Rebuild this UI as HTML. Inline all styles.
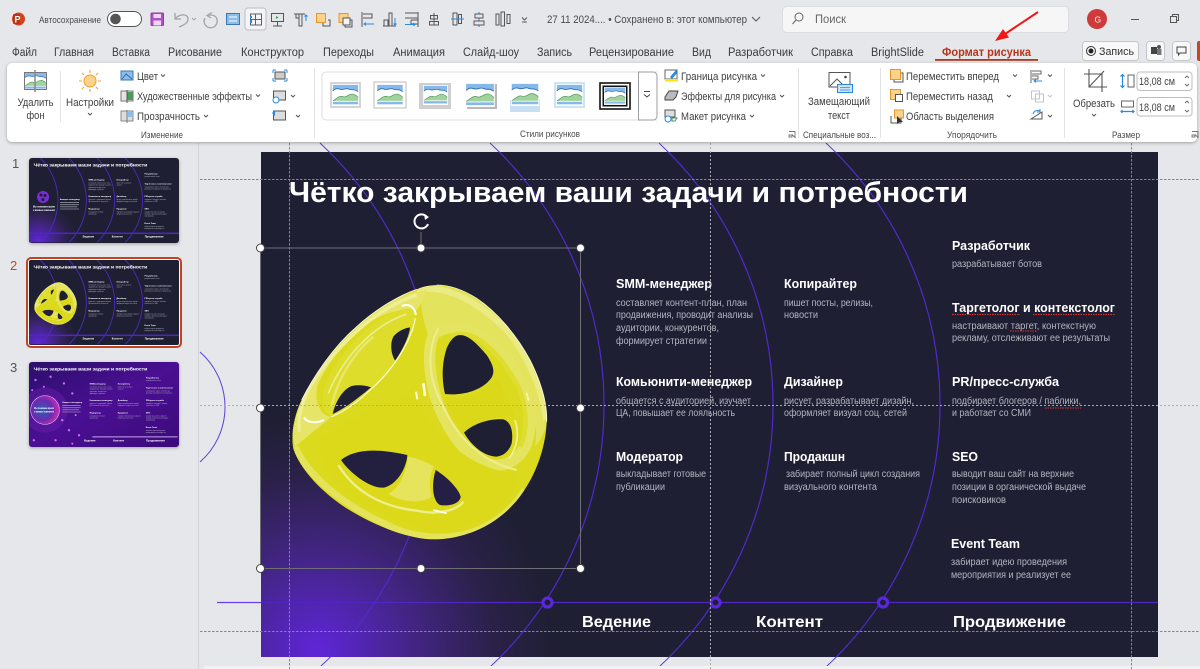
<!DOCTYPE html>
<html><head><meta charset="utf-8"><style>
html,body{margin:0;padding:0;background:#e6e7ea;width:1200px;height:669px;overflow:hidden}
svg{display:block;overflow:hidden;font-family:"Liberation Sans","Noto Sans CJK JP",sans-serif}
.r{font-size:11px;fill:#404040}
.s{font-size:9.5px;fill:#4a4a4a}
.tb{font-size:11.5px;fill:#3a3a3a}
.h{font-size:13px;font-weight:bold;fill:#fff}
.d{font-size:10px;fill:#b4b5c0}
.b{font-size:16px;font-weight:bold;fill:#fff}
.ch{fill:none;stroke:#555;stroke-width:1}
</style></head><body>
<svg width="1200" height="669" viewBox="0 0 1200 669" xmlns="http://www.w3.org/2000/svg">
<defs>
<radialGradient id="glow" gradientUnits="userSpaceOnUse" cx="318" cy="650" r="235">
<stop offset="0" stop-color="#5f25d9"/><stop offset=".4" stop-color="#432585"/><stop offset=".75" stop-color="#2a2148"/><stop offset="1" stop-color="#1e1f33"/>
</radialGradient>
<linearGradient id="purp" x1="0" y1="0" x2="1" y2="1"><stop offset="0" stop-color="#2b0f6b"/><stop offset=".5" stop-color="#4a0f92"/><stop offset="1" stop-color="#3b0a7a"/></linearGradient>
<radialGradient id="orb" cx=".4" cy=".5" r=".6"><stop offset="0" stop-color="#2a5fb0"/><stop offset=".6" stop-color="#6a2bb0"/><stop offset="1" stop-color="#d12fb0"/></radialGradient>
<clipPath id="slideClip"><rect x="261" y="152" width="897" height="505"/></clipPath>
<filter id="sh" x="-2%" y="-10%" width="104%" height="125%" color-interpolation-filters="sRGB"><feDropShadow dx="0" dy="1" stdDeviation="1.5" flood-color="#000" flood-opacity=".3"/></filter>
<clipPath id="yc"><path d="M530,135 C570,135 610,150 650,175 C710,215 770,285 810,360 C845,430 862,490 860,545 C858,610 835,690 790,755 C750,815 690,860 620,882 C580,895 540,900 500,897 C430,890 340,855 260,805 C190,760 120,690 100,625 C92,590 100,530 125,480 C160,410 220,320 290,260 C350,205 420,165 470,148 C490,140 510,135 530,135Z"/></clipPath>
<symbol id="pic" viewBox="0 0 32 26" overflow="visible">
<rect x="0" y="0" width="32" height="26" fill="#fff"/>
<path d="M1,1H31V9C26,5 24,8 20,6 C16,4 13,8 9,6 C6,5 3,6 1,8Z" fill="#86b9ea"/>
<path d="M1,8C3,6 6,5 9,6C13,8 16,4 20,6C24,8 26,5 31,9" fill="none" stroke="#2b6cb8" stroke-width="1"/>
<path d="M1,20C6,17 9,13 13,15C17,17 20,11 25,12C28,13 30,14 31,16V20Z" fill="#a3d39c"/>
<path d="M1,20C6,17 9,13 13,15C17,17 20,11 25,12C28,13 30,14 31,16" fill="none" stroke="#4d9a5a" stroke-width=".8"/>
<rect x="1" y="21" width="30" height="3" fill="#86b9ea"/>
</symbol>
<g id="arcs" fill="none">
<path d="M320,143A358,358 0 0 1 320,667"/>
<path d="M490,143A358,358 0 0 1 490,667"/>
<path d="M659,143A358,358 0 0 1 659,667"/>
<path d="M826,143A358,358 0 0 1 826,667"/>
</g>
<g id="yellow">
<g transform="translate(260 240) scale(.33333)">
<g clip-path="url(#yc)">
<rect x="80" y="120" width="800" height="800" fill="#dcda1e"/>
<!-- broad lighter top -->
<path d="M480,140 C480,190 490,250 510,300 C600,230 720,300 790,430 C820,500 835,560 825,620 C860,580 880,500 860,440 C810,300 650,110 480,140Z" fill="#e4e35e"/>
<path d="M470,150 C560,130 660,190 740,270 C800,340 850,450 858,540" fill="none" stroke="#ebeb86" stroke-width="18"/>
<!-- left rim -->
<path d="M500,150 C490,180 480,200 465,215 C360,190 240,300 175,430 C160,470 175,530 215,530 C180,560 140,590 105,620 C85,560 120,470 180,385 C260,270 380,160 500,150Z" fill="#e6e568"/>
<path d="M470,165 C360,200 240,300 150,440 C125,490 112,530 118,575" fill="none" stroke="#eeee96" stroke-width="10"/>
<!-- bottom rim -->
<path d="M105,620 C150,720 270,810 420,872 C480,892 540,896 600,886 C680,870 750,820 795,750" fill="none" stroke="#e4e35a" stroke-width="20"/>
<!-- rings around right holes -->
<path d="M525,280 C590,235 680,280 750,370 C800,440 825,530 800,610 C770,680 700,695 640,650 C580,600 530,510 515,420 C505,360 505,310 525,280Z" fill="none" stroke="#e5e460" stroke-width="34"/>
<path d="M535,265 C505,320 500,400 540,480 C575,560 640,660 770,690" fill="none" stroke="#eeee90" stroke-width="6"/>
<path d="M570,290 C640,255 720,340 775,440 C800,500 805,570 780,620" fill="none" stroke="#dedd30" stroke-width="14"/>
<!-- spokes -->
<path d="M552,472 C620,480 680,455 712,410 L765,530 C700,525 650,545 608,580 C585,540 565,510 552,472Z" fill="#dad818"/>
<!-- center body stays darker -->
<path d="M180,590 C300,530 420,450 470,480 C520,560 600,680 760,700 C790,720 760,770 700,820 C640,860 560,880 500,870 C420,850 300,800 220,720 C190,680 170,630 180,590Z" fill="#dbd91a"/>
<!-- pale spoke at bottom -->
<path d="M445,650 C435,710 415,745 385,762 C430,790 490,790 515,770 C505,730 510,700 522,680 C500,665 470,655 445,650Z" fill="#e5e45c"/>
<!-- hole lip bottom -->
<path d="M235,675 C280,750 360,800 470,812 C530,826 590,812 610,785" fill="none" stroke="#eeee90" stroke-width="7"/>
<!-- inner left face -->
<path d="M452,205 C380,205 260,300 200,420 C180,470 185,520 215,530 C300,490 400,410 452,292 C470,245 470,210 452,205Z" fill="#dedd2c"/>
<path d="M205,460 C250,350 340,255 440,222" fill="none" stroke="#ecec90" stroke-width="5"/>
<path d="M215,500 C230,420 280,340 340,290" fill="none" stroke="#e8e770" stroke-width="7"/>
</g>
<!-- holes -->
<path fill="#1e1f33" d="M600,285 C625,285 650,310 680,345 C700,375 705,395 695,412 C670,450 610,468 555,462 C545,420 545,370 560,325 C570,300 585,285 600,285Z"/>
<path fill="#1e1f33" d="M612,578 C640,550 690,535 730,538 C755,545 760,580 755,610 C745,640 720,655 695,648 C660,640 630,610 612,578Z"/>
<path fill="#231f3e" d="M243,660 C280,630 340,622 442,645 C440,680 415,730 375,742 C335,750 270,700 243,660Z"/>
<path fill="#251f46" d="M527,690 C560,710 595,745 602,770 C600,790 570,800 540,795 C520,785 512,740 527,690Z"/>
<path fill="#1e1f33" d="M450,262 C448,290 425,335 405,362 C392,340 390,310 400,290 C412,275 430,265 450,262Z"/>
<path fill="#1f2035" d="M333,442 C300,470 255,505 218,522 C225,490 245,450 275,438 C295,434 315,436 333,442Z"/>
<!-- specular -->
<path d="M466,235 C455,300 400,390 330,450 C290,490 250,515 215,530" fill="none" stroke="#fbfbe0" stroke-width="3.5"/>
<path d="M425,198 C445,190 462,197 468,225" fill="none" stroke="#fff" stroke-width="6"/>
<path d="M132,532 C142,550 170,550 192,540" fill="none" stroke="#fff" stroke-width="6"/>
<path d="M490,430 L495,468" fill="none" stroke="#fbfbd8" stroke-width="8"/>
<path d="M468,455 L472,478" fill="none" stroke="#fbfbd8" stroke-width="6"/>
<path d="M800,458 L806,482" fill="none" stroke="#f6f6b0" stroke-width="5"/>
<path d="M765,540 C778,580 772,620 748,655" fill="none" stroke="#f1f19a" stroke-width="5"/>
<path d="M520,810 L560,820" fill="none" stroke="#fff" stroke-width="5"/>
<path d="M530,135 C570,135 610,150 650,175 C710,215 770,285 810,360 C845,430 862,490 860,545 M125,480 C160,410 220,320 290,260 C350,205 420,165 470,148" fill="none" stroke="#f9f9d8" stroke-width="2.5"/>
</g>
</g>
<g id="stext">
<text class="h" x="616" y="288" textLength="96" lengthAdjust="spacingAndGlyphs">SMM-менеджер</text>
<text class="d" x="616" y="306" textLength="131" lengthAdjust="spacingAndGlyphs">составляет контент-план, план</text>
<text class="d" x="616" y="318" textLength="137" lengthAdjust="spacingAndGlyphs">продвижения, проводит анализы</text>
<text class="d" x="616" y="331" textLength="103" lengthAdjust="spacingAndGlyphs">аудитории, конкурентов,</text>
<text class="d" x="616" y="344" textLength="91" lengthAdjust="spacingAndGlyphs">формирует стратегии</text>
<text class="h" x="784" y="288" textLength="73" lengthAdjust="spacingAndGlyphs">Копирайтер</text>
<text class="d" x="784" y="306" textLength="89" lengthAdjust="spacingAndGlyphs">пишет посты, релизы,</text>
<text class="d" x="784" y="318" textLength="34" lengthAdjust="spacingAndGlyphs">новости</text>
<text class="h" x="952" y="250" textLength="78" lengthAdjust="spacingAndGlyphs">Разработчик</text>
<text class="d" x="952" y="267" textLength="90" lengthAdjust="spacingAndGlyphs">разрабатывает ботов</text>
<text class="h" x="952" y="312" textLength="163" lengthAdjust="spacingAndGlyphs">Таргетолог и контекстолог</text>
<text class="d" x="952" y="329" textLength="144" lengthAdjust="spacingAndGlyphs">настраивают таргет, контекстную</text>
<text class="d" x="952" y="341" textLength="158" lengthAdjust="spacingAndGlyphs">рекламу, отслеживают ее результаты</text>
<text class="h" x="616" y="386" textLength="136" lengthAdjust="spacingAndGlyphs">Комьюнити-менеджер</text>
<text class="d" x="616" y="404" textLength="135" lengthAdjust="spacingAndGlyphs">общается с аудиторией, изучает</text>
<text class="d" x="616" y="416" textLength="119" lengthAdjust="spacingAndGlyphs">ЦА, повышает ее лояльность</text>
<text class="h" x="784" y="386" textLength="59" lengthAdjust="spacingAndGlyphs">Дизайнер</text>
<text class="d" x="784" y="404" textLength="130" lengthAdjust="spacingAndGlyphs">рисует, разрабатывает дизайн,</text>
<text class="d" x="784" y="416" textLength="123" lengthAdjust="spacingAndGlyphs">оформляет визуал соц. сетей</text>
<text class="h" x="952" y="386" textLength="107" lengthAdjust="spacingAndGlyphs">PR/пресс-служба</text>
<text class="d" x="952" y="404" textLength="129" lengthAdjust="spacingAndGlyphs">подбирает блогеров / паблики,</text>
<text class="d" x="952" y="416" textLength="79" lengthAdjust="spacingAndGlyphs">и работает со СМИ</text>
<text class="h" x="616" y="461" textLength="67" lengthAdjust="spacingAndGlyphs">Модератор</text>
<text class="d" x="616" y="477" textLength="90" lengthAdjust="spacingAndGlyphs">выкладывает готовые</text>
<text class="d" x="616" y="490" textLength="49" lengthAdjust="spacingAndGlyphs">публикации</text>
<text class="h" x="784" y="461" textLength="61" lengthAdjust="spacingAndGlyphs">Продакшн</text>
<text class="d" x="786" y="477" textLength="134" lengthAdjust="spacingAndGlyphs">забирает полный цикл создания</text>
<text class="d" x="784" y="490" textLength="93" lengthAdjust="spacingAndGlyphs">визуального контента</text>
<text class="h" x="952" y="461" textLength="26" lengthAdjust="spacingAndGlyphs">SEO</text>
<text class="d" x="952" y="477" textLength="122" lengthAdjust="spacingAndGlyphs">выводит ваш сайт на верхние</text>
<text class="d" x="952" y="490" textLength="134" lengthAdjust="spacingAndGlyphs">позиции в органической выдаче</text>
<text class="d" x="952" y="503" textLength="54" lengthAdjust="spacingAndGlyphs">поисковиков</text>
<text class="h" x="951" y="548" textLength="69" lengthAdjust="spacingAndGlyphs">Event Team</text>
<text class="d" x="951" y="565" textLength="116" lengthAdjust="spacingAndGlyphs">забирает идею проведения</text>
<text class="d" x="951" y="578" textLength="120" lengthAdjust="spacingAndGlyphs">мероприятия и реализует ее</text>
<text class="b" x="582" y="627" textLength="69" lengthAdjust="spacingAndGlyphs">Ведение</text>
<text class="b" x="756" y="627" textLength="67" lengthAdjust="spacingAndGlyphs">Контент</text>
<text class="b" x="953" y="627" textLength="113" lengthAdjust="spacingAndGlyphs">Продвижение</text>
</g>
<text id="stitle" x="289" y="202" font-size="29" font-weight="bold" fill="#fff" textLength="679" lengthAdjust="spacingAndGlyphs">Чётко закрываем ваши задачи и потребности</text>
</defs>

<rect width="1200" height="669" fill="#e6e7ea"/>

<!-- off-slide arcs -->
<use href="#arcs" stroke="#5c3fd6" stroke-width="1"/>
<path d="M200,352A73,73 0 0 1 200,462" fill="none" stroke="#5c3fd6" stroke-width="1"/>
<line x1="217" y1="602.5" x2="261" y2="602.5" stroke="#6a3de8" stroke-width="1.2"/>
<line x1="198.5" y1="143" x2="198.5" y2="669" stroke="#d3d4d8"/>
<rect x="204" y="666" width="996" height="3" fill="#f2f2f3"/>

<!-- slide -->
<rect x="261" y="152" width="897" height="505" fill="#1e1f33"/>
<g clip-path="url(#slideClip)">
<rect x="261" y="400" width="400" height="257" fill="url(#glow)"/>
<use href="#arcs" stroke="#4f2bc9" stroke-width="1.2"/>
<line x1="261" y1="602.5" x2="1158" y2="602.5" stroke="#4f25c4" stroke-width="1.3"/>
</g>
<g fill="#1e1f33" stroke="#5a26e0" stroke-width="3.2">
<circle cx="547.5" cy="602.5" r="4.5"/><circle cx="715.5" cy="602.5" r="4.5"/><circle cx="883" cy="602.5" r="4.5"/>
</g>
<use href="#stext"/>
<use href="#stitle"/>
<!-- spell squiggles -->
<g fill="none" stroke="#d33" stroke-width=".9" stroke-dasharray="1.5 1">
<path d="M952,314.5H1020M1033,314.5H1115M1010,331H1037M1045,408H1081"/>
</g>

<!-- guides -->
<g fill="none" stroke-width="1" stroke-dasharray="2.5 1.5">
<path d="M200,179.5H1200M200,631.5H1200M289.5,143V669M1131.5,143V669" stroke="#e8623c"/>
</g>
<path d="M200,405.5H1200M710.5,143V669" fill="none" stroke="#a9aab2" stroke-dasharray="2 2"/>

<use href="#yellow"/>
<!-- guide stays over picture -->
<path d="M292,405.5H547" fill="none" stroke="#a9aab2" stroke-dasharray="2 2"/>

<!-- selection -->
<rect x="260.5" y="248" width="320" height="320.5" fill="none" stroke="#6e6e76" stroke-width="1"/>
<line x1="421" y1="232" x2="421" y2="248" stroke="#6e6e76"/>
<g fill="#fff" stroke="#444" stroke-width="1">
<circle cx="260.5" cy="248" r="4"/><circle cx="421" cy="248" r="4"/><circle cx="580.5" cy="248" r="4"/>
<circle cx="260.5" cy="408" r="4"/><circle cx="580.5" cy="408" r="4"/>
<circle cx="260.5" cy="568.5" r="4"/><circle cx="421" cy="568.5" r="4"/><circle cx="580.5" cy="568.5" r="4"/>
</g>
<g fill="none" stroke="#fff" stroke-width="2"><path d="M426.5,216.5A7,7 0 1 0 428,224"/></g>
<path d="M424,214L429,217L425,220Z" fill="#fff"/>

<!-- thumbnails -->
<text x="12" y="168" font-size="13" fill="#555">1</text>
<text x="10" y="270" font-size="13" fill="#c8452a">2</text>
<text x="10" y="372" font-size="13" fill="#555">3</text>

<rect x="27" y="258" width="154" height="89" rx="4" fill="#fff" stroke="#c2431f" stroke-width="2"/>
<g filter="url(#sh)"><rect x="29" y="158" width="150" height="85" rx="3" fill="#1e1f33"/></g>
<rect x="29" y="260" width="150" height="85" rx="2" fill="#1e1f33"/>
<g filter="url(#sh)"><rect x="29" y="362" width="150" height="85" rx="3" fill="url(#purp)"/></g>

<g transform="translate(29 158) scale(.1672) translate(-261 -152)">
<g clip-path="url(#slideClip)"><rect x="261" y="400" width="400" height="257" fill="url(#glow)"/><use href="#arcs" stroke="#4f2bc9" stroke-width="5"/><rect x="261" y="598" width="897" height="9" fill="#4f25c4"/></g>
<use href="#stext"/><use href="#stitle"/>
<text x="285" y="448" font-size="17" font-weight="bold" fill="#fff" textLength="131" lengthAdjust="spacingAndGlyphs">Мы понимаем время</text>
<text x="285" y="470" font-size="17" font-weight="bold" fill="#fff" textLength="131" lengthAdjust="spacingAndGlyphs">и важные изменения</text>
<text x="446" y="403" class="h" textLength="119" lengthAdjust="spacingAndGlyphs">Аккаунт-менеджер</text>
<path d="M446,418H560M446,431H560M446,444H550M446,457H560" stroke="#8f90a0" stroke-width="5"/>
<g transform="translate(345 385) scale(.3) translate(-421 -408)"><circle cx="421" cy="408" r="120" fill="#7a2bd8"/><circle cx="380" cy="370" r="30" fill="#1e1f33"/><circle cx="460" cy="380" r="30" fill="#1e1f33"/><circle cx="420" cy="460" r="30" fill="#1e1f33"/></g>
</g>
<g transform="translate(29 260) scale(.1672) translate(-261 -152)">
<g clip-path="url(#slideClip)"><rect x="261" y="400" width="400" height="257" fill="url(#glow)"/><use href="#arcs" stroke="#4f2bc9" stroke-width="5"/><rect x="261" y="598" width="897" height="9" fill="#4f25c4"/></g>
<use href="#stext"/><use href="#stitle"/>
<use href="#yellow"/>
</g>
<g transform="translate(29 362) scale(.1672) translate(-261 -152)">
<g clip-path="url(#slideClip)">
<circle cx="357" cy="439" r="135" fill="#6a1fb0" opacity=".45"/>
<circle cx="357" cy="439" r="86" fill="url(#orb)" stroke="#e9c7ff" stroke-width="3"/>
<g fill="#d46bff"><circle cx="300" cy="260" r="7"/><circle cx="390" cy="240" r="7"/><circle cx="470" cy="280" r="7"/><circle cx="520" cy="340" r="7"/><circle cx="500" cy="560" r="7"/><circle cx="560" cy="590" r="7"/><circle cx="290" cy="620" r="7"/><circle cx="420" cy="620" r="7"/><circle cx="460" cy="500" r="7"/><circle cx="540" cy="470" r="6"/><circle cx="350" cy="300" r="6"/><circle cx="280" cy="320" r="6"/><circle cx="520" cy="640" r="6"/></g>
</g>
<use href="#stext" transform="translate(8 0)"/><use href="#stitle"/>
<text x="292" y="432" font-size="14" font-weight="bold" fill="#fff" textLength="118" lengthAdjust="spacingAndGlyphs">Мы понимаем время</text>
<text x="292" y="454" font-size="14" font-weight="bold" fill="#fff" textLength="118" lengthAdjust="spacingAndGlyphs">и важные изменения</text>
<text x="460" y="397" class="h" textLength="119" lengthAdjust="spacingAndGlyphs">Аккаунт-менеджер</text>
<path d="M460,412H570M460,425H570M460,438H560M460,451H570" stroke="#9a7fc0" stroke-width="5"/>
<path d="M640,600H1150" stroke="#c9a3f2" stroke-width="6"/>
</g>

<!-- title bar -->
<circle cx="18.5" cy="19" r="6.5" fill="#d2431f"/>
<rect x="13" y="14" width="7" height="10" rx="1" fill="#b7361a"/>
<text x="14.5" y="22.5" font-size="9" font-weight="bold" fill="#fff">P</text>
<text class="s" x="39" y="23" textLength="62" lengthAdjust="spacingAndGlyphs">Автосохранение</text>
<rect x="107.5" y="11.5" width="34" height="15" rx="7.5" fill="#fff" stroke="#555"/>
<circle cx="115.5" cy="19" r="5.3" fill="#555"/>
<rect x="151" y="13" width="12.5" height="12.5" rx="1" fill="#b052c8" stroke="#93389f"/><rect x="153.5" y="14" width="7.5" height="4" fill="#f0d6f4"/><rect x="153.5" y="20.5" width="7.5" height="5" fill="#f0d6f4"/>
<g fill="none" stroke="#a2a3a8" stroke-width="1.3">
<path d="M175,13V19H181M175,19C180,13 188,14 188,19 C188,23 184,25 179,27"/>
<path d="M192,18l2,2l2-2" stroke-width=".9"/>
<path d="M212,12.5L207,15.5L211,18M207,15.5C212,14 217,16 217,20A6.5,6.5 0 1 1 205,18"/>
</g>
<!-- qat -->
<rect x="226.5" y="13.5" width="13" height="11" fill="#8dbce6" stroke="#3b78b5"/><path d="M229,17H237M229,21H237" stroke="#fff"/>
<rect x="245" y="8" width="21" height="22" rx="3" fill="#f4f4f6" stroke="#bdbdc2"/>
<g fill="none" stroke="#5f6066"><path d="M250.5,14H261.5V25H250.5ZM250.5,19.5H261.5M255.5,14V25"/></g><path d="M251,16V18M251,20V23" stroke="#2a8adf" stroke-width="2"/>
<g fill="none" stroke="#55565c">
<path d="M271.5,13.5H283.5V21.5H271.5ZM277.5,21.5V26M273,26H282"/><path d="M276,16v3l2.5-1.5z" fill="#2fa14a" stroke="none"/>
<path d="M294,14H305M296,14V18H299V14M299,14V26H302V14"/><path d="M306,21V15M304.5,16.5L306,15L307.5,16.5" stroke="#2a8adf"/>
<path d="M323,20V26H330V20H328" />
<path d="M345,23V27H352V20H348V23Z"/>
<path d="M362,12V27"/><path d="M363,14H372V18H363"/><path d="M374,24H364M366,22.5L364,24L366,25.5" stroke="#2a8adf"/>
<path d="M384,26V20H388V26M389,26V13H392V26M383,26H396"/><path d="M395,18V25M393.5,23.5L395,25L396.5,23.5" stroke="#2a8adf"/>
<path d="M405,13H418M405,18H418M418,12V27M411,20H418M411,24H418M411,20V24"/><path d="M405,24.5H415M413.5,23L415,24.5L413.5,26" stroke="#2a8adf"/>
<path d="M434,13V25"/><rect x="430.5" y="15.5" width="7" height="3.5"/><rect x="429.5" y="21.5" width="9" height="3.5"/>
<rect x="453" y="13" width="4" height="12"/><rect x="458.5" y="14.5" width="3" height="9"/><path d="M451,19H464" stroke="#2a8adf"/>
<path d="M479,12V27" stroke="#2a8adf"/><rect x="475" y="14" width="8" height="4" fill="#e6e7ea"/><rect x="474" y="21" width="10" height="4" fill="#e6e7ea"/>
<rect x="496" y="14" width="3" height="11"/><rect x="501" y="12" width="3.5" height="14"/><rect x="507" y="14.5" width="3" height="9"/>
<path d="M522,17.5l2.5,2.5l2.5-2.5M522,22H527"/>
</g>
<rect x="316.5" y="13.5" width="9" height="9" fill="#fbd28a" stroke="#e8972c"/>
<rect x="339" y="13.5" width="9" height="9" fill="#fbd28a" stroke="#e8972c"/><rect x="343" y="18" width="7" height="7" fill="#f4f4f6" stroke="#55565c"/>
<text x="547" y="23" style="font-size:11px;fill:#4a4a4a" textLength="200" lengthAdjust="spacingAndGlyphs">27 11 2024.... • Сохранено в: этот компьютер</text>
<path d="M752,17l4,4l4-4" class="ch"/>
<rect x="782.5" y="6.5" width="286" height="26" rx="4" fill="#f6f6f7" stroke="#dcdde0"/>
<circle cx="799" cy="17" r="4" fill="none" stroke="#666"/><path d="M796,20l-3.5,4" stroke="#666"/>
<text x="815" y="23" font-size="11.5" fill="#666" textLength="31" lengthAdjust="spacingAndGlyphs">Поиск</text>
<circle cx="1097" cy="19" r="10" fill="#cf3a3a"/>
<text x="1094.5" y="22.5" font-size="8.5" fill="#fff">G</text>
<line x1="1131" y1="19.5" x2="1139" y2="19.5" stroke="#555"/>
<path d="M1170.5,16.5H1176.5V22.5H1170.5ZM1172.5,16V14.5H1178.5V20.5H1177" fill="none" stroke="#555"/>

<!-- tabs -->
<g>
<text class="tb" x="12" y="56" textLength="25" lengthAdjust="spacingAndGlyphs">Файл</text>
<text class="tb" x="54" y="56" textLength="40" lengthAdjust="spacingAndGlyphs">Главная</text>
<text class="tb" x="112" y="56" textLength="38" lengthAdjust="spacingAndGlyphs">Вставка</text>
<text class="tb" x="168" y="56" textLength="54" lengthAdjust="spacingAndGlyphs">Рисование</text>
<text class="tb" x="241" y="56" textLength="63" lengthAdjust="spacingAndGlyphs">Конструктор</text>
<text class="tb" x="323" y="56" textLength="51" lengthAdjust="spacingAndGlyphs">Переходы</text>
<text class="tb" x="393" y="56" textLength="52" lengthAdjust="spacingAndGlyphs">Анимация</text>
<text class="tb" x="463" y="56" textLength="56" lengthAdjust="spacingAndGlyphs">Слайд-шоу</text>
<text class="tb" x="537" y="56" textLength="35" lengthAdjust="spacingAndGlyphs">Запись</text>
<text class="tb" x="589" y="56" textLength="85" lengthAdjust="spacingAndGlyphs">Рецензирование</text>
<text class="tb" x="692" y="56" textLength="19" lengthAdjust="spacingAndGlyphs">Вид</text>
<text class="tb" x="728" y="56" textLength="65" lengthAdjust="spacingAndGlyphs">Разработчик</text>
<text class="tb" x="811" y="56" textLength="42" lengthAdjust="spacingAndGlyphs">Справка</text>
<text class="tb" x="871" y="56" textLength="53" lengthAdjust="spacingAndGlyphs">BrightSlide</text>
<text x="942" y="56" font-size="11.5" font-weight="bold" fill="#b5361a" textLength="89" lengthAdjust="spacingAndGlyphs">Формат рисунка</text>
</g>
<rect x="935" y="59" width="103" height="1.8" fill="#b5361a"/>
<path d="M1038,12L1002,36" stroke="#f01818" stroke-width="2"/><path d="M995,41L1009,37.5L1003,29Z" fill="#f01818"/>

<rect x="1082.5" y="41.5" width="56" height="19" rx="3" fill="#f8f8f9" stroke="#c5c6ca"/>
<circle cx="1091" cy="51" r="4.5" fill="none" stroke="#333"/><circle cx="1091" cy="51" r="2.5" fill="#222"/>
<text x="1099" y="55" font-size="11" fill="#333" textLength="35" lengthAdjust="spacingAndGlyphs">Запись</text>
<rect x="1146.5" y="41.5" width="18" height="19" rx="3" fill="#f8f8f9" stroke="#c5c6ca"/>
<rect x="1151" y="47" width="6" height="7" fill="#444"/><circle cx="1159" cy="47" r="2" fill="#555"/><rect x="1157" y="49" width="4.5" height="6" fill="#777"/>
<rect x="1172.5" y="41.5" width="18" height="19" rx="3" fill="#f8f8f9" stroke="#c5c6ca"/>
<path d="M1177,47H1186V53H1180L1178.5,55V53H1177Z" fill="none" stroke="#444"/>
<rect x="1197" y="41" width="6" height="20" rx="2" fill="#c5481f"/>

<!-- ribbon panel -->
<rect x="7" y="63" width="1190" height="79" rx="5" fill="#fff" filter="url(#sh)"/>
<g stroke="#e2e3e6"><path d="M60.5,71V122M314.5,68V138M798.5,68V138M880.5,68V138M1064.5,68V138"/></g>

<!-- group 1 -->
<use href="#pic" x="24" y="72" width="23" height="18"/>
<rect x="24.5" y="72.5" width="22" height="17" fill="none" stroke="#777"/>
<line x1="35" y1="70" x2="35" y2="92" stroke="#888" stroke-width="1.5"/>
<text class="r" x="17.5" y="106" textLength="36" lengthAdjust="spacingAndGlyphs">Удалить</text>
<text class="r" x="26.5" y="119" textLength="18" lengthAdjust="spacingAndGlyphs">фон</text>
<circle cx="90" cy="81" r="6" fill="#fbd38a" stroke="#f0a030"/>
<path d="M90,70V73M90,89V92M79,81H82M98,81H101M82,73L84,75M96,87L98,89M98,73L96,75M84,87L82,89" stroke="#f0a030" stroke-width="1.1"/>
<text class="r" x="66" y="106" textLength="48" lengthAdjust="spacingAndGlyphs">Настройки</text>
<path d="M88,113l2,2l2-2" class="ch"/>

<rect x="121" y="71" width="12" height="9" fill="#8ebde8" stroke="#3b78b5"/><path d="M122,79L126,74L132,79" fill="none" stroke="#2b6cb8"/>
<text class="r" x="137" y="80" textLength="21" lengthAdjust="spacingAndGlyphs">Цвет</text><path d="M161,74.5l2,2l2-2" class="ch"/>
<rect x="121" y="91" width="12" height="10" fill="#e4e4e4" stroke="#777"/><rect x="127" y="92" width="6" height="8" fill="#4d9a5a"/><line x1="127" y1="90" x2="127" y2="103" stroke="#555"/>
<text class="r" x="137" y="100" textLength="115" lengthAdjust="spacingAndGlyphs">Художественные эффекты</text><path d="M256,94.5l2,2l2-2" class="ch"/>
<rect x="121" y="111" width="12" height="10" fill="#ddd" stroke="#888"/><rect x="128" y="112" width="5" height="5" fill="#8ebde8"/><line x1="127" y1="110" x2="127" y2="123" stroke="#777"/>
<text class="r" x="137" y="120" textLength="63" lengthAdjust="spacingAndGlyphs">Прозрачность</text><path d="M204,115l2,2l2-2" class="ch"/>

<rect x="275" y="72" width="10" height="7" fill="#ccc" stroke="#555"/><path d="M273,70v3M273,70h3M287,70v3M287,70h-3M273,81v-3M273,81h3M287,81v-3M287,81h-3" stroke="#2a8adf" fill="none"/>
<rect x="273.5" y="91" width="12" height="9" fill="#ddd" stroke="#555"/><circle cx="276" cy="100" r="3" fill="#fff" stroke="#2a8adf"/>
<path d="M291,95l2,2l2-2" class="ch"/>
<rect x="273.5" y="111" width="12" height="9" fill="#ddd" stroke="#555"/><path d="M272,113l3-3v6z" fill="#2a8adf"/>
<path d="M296,115l2,2l2-2" class="ch"/>
<text class="s" x="141" y="138" textLength="42" lengthAdjust="spacingAndGlyphs">Изменение</text>

<!-- gallery -->
<path d="M657,72H326a4,4 0 0 0 -4,4V116a4,4 0 0 0 4,4H657" fill="#fff" stroke="#dcdde0"/>
<path d="M638.5,72V120H653a4,4 0 0 0 4,-4V76a4,4 0 0 0 -4,-4Z" fill="#fff" stroke="#9c9da2"/>
<path d="M644,94.5l3,2.5l3,-2.5M644,91.5H650" fill="none" stroke="#444"/>
<rect x="330" y="82" width="31" height="26" fill="#d4d4d4"/><use href="#pic" x="332" y="84" width="27" height="22"/>
<rect x="374" y="82" width="32" height="26" fill="#fff" stroke="#bbb"/><use href="#pic" x="376" y="84" width="28" height="22"/>
<rect x="419" y="83" width="32" height="26" fill="#cfcfcf"/><use href="#pic" x="423" y="85" width="25" height="20"/>
<rect x="467" y="84" width="30" height="25" fill="#b9b9bb"/><use href="#pic" x="465" y="83" width="30" height="24"/>
<rect x="510" y="100" width="30" height="12" fill="#c8def2"/><use href="#pic" x="510" y="83" width="30" height="23"/>
<rect x="554" y="82" width="31" height="26" fill="#cfe3f5"/><use href="#pic" x="556" y="84" width="27" height="22"/>
<rect x="600" y="83" width="30" height="26" fill="#fff" stroke="#111" stroke-width="1.6"/><rect x="602.5" y="85.5" width="25" height="21" fill="#111"/><use href="#pic" x="604" y="87" width="22" height="18"/>
<text class="s" x="520" y="137" textLength="60" lengthAdjust="spacingAndGlyphs">Стили рисунков</text>
<path d="M789,131.5H795V137M789,135H792V137H789Z M792,134.5L795.5,138" fill="none" stroke="#777" stroke-width=".9"/>

<!-- picture -->
<rect x="665" y="70" width="12" height="9" fill="#fff" stroke="#666"/><path d="M670,77L676,70L678,72L672,79Z" fill="#2a8adf"/><rect x="665" y="79" width="13" height="2.5" fill="#ffe600"/>
<text class="r" x="681" y="80" textLength="76" lengthAdjust="spacingAndGlyphs">Граница рисунка</text><path d="M761,74.5l2,2l2-2" class="ch"/>
<path d="M665,97L669,91H678L676,97L673,100H665Z" fill="#bbb" stroke="#444"/>
<text class="r" x="681" y="100" textLength="95" lengthAdjust="spacingAndGlyphs">Эффекты для рисунка</text><path d="M780,95l2,2l2-2" class="ch"/>
<rect x="665" y="110" width="10" height="7" fill="#ddd" stroke="#555"/><circle cx="668" cy="119" r="3" fill="#fff" stroke="#2a8adf"/><path d="M672,118h5l-2,3h-3z" fill="#fff" stroke="#4d9a5a"/>
<text class="r" x="681" y="120" textLength="65" lengthAdjust="spacingAndGlyphs">Макет рисунка</text><path d="M750,115l2,2l2-2" class="ch"/>

<!-- alt -->
<path d="M829,72.5H850V87H829Z" fill="#fff" stroke="#555"/><path d="M830,86L837,79L843,85" fill="none" stroke="#555"/><circle cx="845.5" cy="77" r="1.3" fill="#444"/>
<rect x="837.5" y="84.5" width="15" height="8" fill="#cfe3f5" stroke="#2a8adf"/><path d="M840,87.5H850M840,90H850" stroke="#2a8adf" stroke-width=".8"/>
<text class="r" x="808" y="105" textLength="62" lengthAdjust="spacingAndGlyphs">Замещающий</text>
<text class="r" x="828" y="119" textLength="22" lengthAdjust="spacingAndGlyphs">текст</text>
<text class="s" x="803" y="138" textLength="73" lengthAdjust="spacingAndGlyphs">Специальные воз...</text>

<!-- arrange -->
<rect x="890.5" y="69.5" width="10" height="10" fill="#fbd28a" stroke="#e8972c"/><path d="M901,73H903V82H894V80" fill="none" stroke="#555"/>
<text class="r" x="906" y="80" textLength="93" lengthAdjust="spacingAndGlyphs">Переместить вперед</text><path d="M1013,74.5l2,2l2-2" class="ch"/>
<rect x="890.5" y="89.5" width="10" height="10" fill="#fbd28a" stroke="#e8972c"/><rect x="895.5" y="94.5" width="7" height="7" fill="#fff" stroke="#555"/>
<text class="r" x="906" y="100" textLength="87" lengthAdjust="spacingAndGlyphs">Переместить назад</text><path d="M1007,95l2,2l2-2" class="ch"/>
<rect x="894.5" y="110" width="9" height="8" fill="#fbd28a" stroke="#e8972c"/><path d="M891,116V123H901V118" fill="none" stroke="#555"/><path d="M897,116L897,124L899.5,122L903,122Z" fill="#333"/>
<text class="r" x="906" y="120" textLength="88" lengthAdjust="spacingAndGlyphs">Область выделения</text>
<g fill="none" stroke="#666"><path d="M1031,70V83M1032,71H1041V74H1032M1032,76H1038V79H1032"/></g><path d="M1042,81H1034M1036,79.5L1034,81L1036,82.5" stroke="#2a8adf" fill="none"/>
<path d="M1048,74.5l2,2l2-2" class="ch"/>
<g fill="none" stroke="#c4c5c8"><rect x="1031.5" y="91" width="8" height="8"/><rect x="1035.5" y="94" width="8" height="8"/><path d="M1048,95l2,2l2-2"/></g>
<path d="M1031,119L1042,112V119Z" fill="none" stroke="#555"/><path d="M1033,114A5,5 0 0 1 1040,111M1040,109v3h-3" fill="none" stroke="#2a8adf"/>
<path d="M1048,115l2,2l2-2" class="ch"/>
<text class="s" x="947" y="138" textLength="50" lengthAdjust="spacingAndGlyphs">Упорядочить</text>

<!-- size -->
<g fill="none" stroke="#555"><path d="M1089,69V87H1107M1084,74H1102V92M1089,87L1104,71" stroke-width="1.1"/></g>
<text class="r" x="1073" y="107" textLength="42" lengthAdjust="spacingAndGlyphs">Обрезать</text><path d="M1092,114l2,2l2-2" class="ch"/>
<rect x="1128" y="75" width="6" height="12" fill="#fff" stroke="#666"/><path d="M1122.5,75V87M1120.5,76.5L1122.5,74.5L1124.5,76.5M1120.5,85.5L1122.5,87.5L1124.5,85.5" fill="none" stroke="#2a8adf" stroke-width="1.2"/>
<rect x="1121.5" y="101" width="12" height="6" fill="#fff" stroke="#666"/><path d="M1121,111.5H1134M1122.5,110L1121,111.5L1122.5,113M1132.5,110L1134,111.5L1132.5,113" fill="none" stroke="#2a8adf" stroke-width="1.2"/>
<rect x="1137" y="72" width="55" height="18.5" rx="3" fill="#fff" stroke="#bcbdc1"/>
<text x="1139" y="85" font-size="11" fill="#444" textLength="36" lengthAdjust="spacingAndGlyphs">18,08 см</text>
<path d="M1185,78l2-2l2,2M1185,84l2,2l2-2" fill="none" stroke="#666" stroke-width=".9"/>
<rect x="1137" y="97.5" width="55" height="18.5" rx="3" fill="#fff" stroke="#bcbdc1"/>
<text x="1139" y="111" font-size="11" fill="#444" textLength="36" lengthAdjust="spacingAndGlyphs">18,08 см</text>
<path d="M1185,103l2-2l2,2M1185,110l2,2l2-2" fill="none" stroke="#666" stroke-width=".9"/>
<text class="s" x="1112" y="138" textLength="28" lengthAdjust="spacingAndGlyphs">Размер</text>
<path d="M1192,131.5H1198V137M1192,135H1195V137H1192Z M1195,134.5L1198.5,138" fill="none" stroke="#777" stroke-width=".9"/>
</svg>
</body></html>
